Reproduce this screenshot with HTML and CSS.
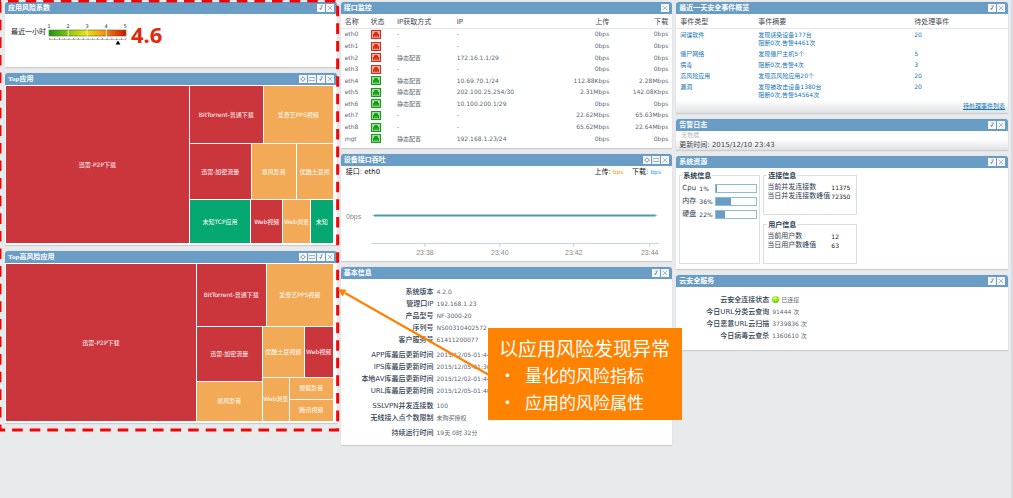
FILE: index.html
```html
<!DOCTYPE html>
<html lang="zh-CN">
<head>
<meta charset="utf-8">
<title>安全网关首页</title>
<link rel="stylesheet" href="styles.css">
</head>
<body>
<svg class="defs" aria-hidden="true">
  <symbol id="i-gear" viewBox="0 0 8 8"><circle cx="4" cy="4" r="1.7" fill="none" stroke="#a3b2be"/><path d="M4 1v1M4 6v1M1 4h1M6 4h1" stroke="#a3b2be"/></symbol>
  <symbol id="i-min" viewBox="0 0 8 8"><path d="M1 2.5h6M1 5.5h6" stroke="#a3b2be" fill="none"/><path d="M1.2 2v4M6.8 2v4" stroke="#b9c3cb" stroke-width=".6"/></symbol>
  <symbol id="i-ref" viewBox="0 0 8 8"><path d="M3.500 2h2.500M5 2.500L3.200 6M2.500 4.500h2" stroke="#8295a3" stroke-width=".9" fill="none"/></symbol>
  <symbol id="i-x" viewBox="0 0 8 8"><path d="M1.8 1.8l4.4 4.4M6.2 1.8L1.8 6.2" stroke="#a3b2be" stroke-width=".9"/></symbol>
  <symbol id="i-port" viewBox="0 0 10 9"><rect x=".5" y=".5" width="9" height="8" fill="#fff" stroke="currentColor"/><rect x="1" y="1" width="8" height="7" fill="currentColor" fill-opacity=".4"/><path d="M2 7.200V4h1V2.500h1V2h2v.5h1V4h1v3.200z" fill="currentColor"/><path d="M3.500 7.200V5.600M5 7.200V5.600M6.500 7.200V5.600" stroke="#fff" stroke-opacity=".5" stroke-width=".6"/></symbol>
</svg>
<main class="board">
  <div class="col marked">
    <section class="panel">
      <header><h2>应用风险系数</h2><button aria-label="刷新"><svg><use href="#i-ref"/></svg></button><button aria-label="关闭"><svg><use href="#i-x"/></svg></button></header>
      <div class="risk">
        <span>最近一小时</span>
        <svg class="gauge" viewBox="0 0 81 24">
          <defs><linearGradient id="g"><stop offset="0" stop-color="#129a10"/><stop offset=".25" stop-color="#8cc414"/><stop offset=".48" stop-color="#e8e30f"/><stop offset=".7" stop-color="#f29a17"/><stop offset="1" stop-color="#d40e00"/></linearGradient></defs>
          <g font-size="5" text-anchor="middle" fill="#333"><text x="2" y="5">1</text><text x="21" y="5">2</text><text x="40" y="5">3</text><text x="59" y="5">4</text><text x="78" y="5">5</text></g>
          <rect x="2" y="7" width="77" height="6" fill="url(#g)" stroke="#5d6b33" stroke-width=".6"/>
          <path d="M21.2 5.500v8.500M40.3 5.500v8.500M59.3 5.500v8.500" stroke="#dfe6ea"/>
          <path d="M2 16.5h77" stroke="#999" stroke-width=".6"/>
          <path d="M2.5 15.9h77" stroke="#555" stroke-dasharray=".8 3.97" stroke-width="1.4"/>
          <path d="M71 17.5l2.4 4h-4.8z" fill="#000"/>
        </svg>
        <strong>4.6</strong>
      </div>
    </section>
    <section class="panel">
      <header><h2>Top应用</h2><button aria-label="设置"><svg><use href="#i-gear"/></svg></button><button aria-label="收起"><svg><use href="#i-min"/></svg></button><button aria-label="刷新"><svg><use href="#i-ref"/></svg></button><button aria-label="关闭"><svg><use href="#i-x"/></svg></button></header>
      <div class="map map-a">
        <div class="red big">迅雷-P2P下载</div>
        <div class="stack a-rows">
          <div class="a1"><div class="red">BitTorrent-普通下载</div><div class="org">爱奇艺PPS视频</div></div>
          <div class="a2"><div class="red">迅雷-加密流量</div><div class="org">暴风影音</div><div class="org">优酷土豆视</div></div>
          <div class="a3"><div class="grn">未知TCP应用</div><div class="red">Web视频</div><div class="org">Web浏览</div><div class="grn">未知</div></div>
        </div>
      </div>
    </section>
    <section class="panel">
      <header><h2>Top高风险应用</h2><button aria-label="设置"><svg><use href="#i-gear"/></svg></button><button aria-label="收起"><svg><use href="#i-min"/></svg></button><button aria-label="刷新"><svg><use href="#i-ref"/></svg></button><button aria-label="关闭"><svg><use href="#i-x"/></svg></button></header>
      <div class="map map-b">
        <div class="red big">迅雷-P2P下载</div>
        <div class="stack b-rows">
          <div class="b1"><div class="red">BitTorrent-普通下载</div><div class="org">爱奇艺PPS视频</div></div>
          <div class="b2">
            <div class="stack b3"><div class="red">迅雷-加密流量</div><div class="org">暴风影音</div></div>
            <div class="stack b4">
              <div class="b5"><div class="org">优酷土豆视频</div><div class="red">Web视频</div></div>
              <div class="b6"><div class="org">Web浏览</div><div class="stack"><div class="org">搜狐影音</div><div class="org">腾讯视频</div></div></div>
            </div>
          </div>
        </div>
      </div>
    </section>
    <svg class="outline" aria-hidden="true"><rect width="100%" height="100%"/></svg>
  </div>

  <div class="col">
    <section class="panel">
      <header><h2>接口监控</h2><button aria-label="关闭"><svg><use href="#i-x"/></svg></button></header>
      <table class="ports">
        <thead><tr><th>名称</th><th>状态</th><th>IP获取方式</th><th>IP</th><th class="num">上传</th><th class="num">下载</th></tr></thead>
        <tbody>
          <tr><td>eth0</td><td class="down"><svg><use href="#i-port"/></svg></td><td>-</td><td>-</td><td class="num">0bps</td><td class="num">0bps</td></tr>
          <tr><td>eth1</td><td class="down"><svg><use href="#i-port"/></svg></td><td>-</td><td>-</td><td class="num">0bps</td><td class="num">0bps</td></tr>
          <tr><td>eth2</td><td class="down"><svg><use href="#i-port"/></svg></td><td>静态配置</td><td>172.16.1.1/29</td><td class="num">0bps</td><td class="num">0bps</td></tr>
          <tr><td>eth3</td><td class="down"><svg><use href="#i-port"/></svg></td><td>-</td><td>-</td><td class="num">0bps</td><td class="num">0bps</td></tr>
          <tr><td>eth4</td><td class="up"><svg><use href="#i-port"/></svg></td><td>静态配置</td><td>10.69.70.1/24</td><td class="num">112.88Kbps</td><td class="num">2.28Mbps</td></tr>
          <tr><td>eth5</td><td class="up"><svg><use href="#i-port"/></svg></td><td>静态配置</td><td>202.100.25.254/30</td><td class="num">2.31Mbps</td><td class="num">142.08Kbps</td></tr>
          <tr><td>eth6</td><td class="up"><svg><use href="#i-port"/></svg></td><td>静态配置</td><td>10.100.200.1/29</td><td class="num">0bps</td><td class="num">0bps</td></tr>
          <tr><td>eth7</td><td class="up"><svg><use href="#i-port"/></svg></td><td>-</td><td>-</td><td class="num">22.62Mbps</td><td class="num">65.63Mbps</td></tr>
          <tr><td>eth8</td><td class="up"><svg><use href="#i-port"/></svg></td><td>-</td><td>-</td><td class="num">65.62Mbps</td><td class="num">22.64Mbps</td></tr>
          <tr><td>mgt</td><td class="up"><svg><use href="#i-port"/></svg></td><td>静态配置</td><td>192.168.1.23/24</td><td class="num">0bps</td><td class="num">0bps</td></tr>
        </tbody>
      </table>
    </section>
    <section class="panel">
      <header><h2>设备接口吞吐</h2><button aria-label="设置"><svg><use href="#i-gear"/></svg></button><button aria-label="收起"><svg><use href="#i-min"/></svg></button><button aria-label="关闭"><svg><use href="#i-x"/></svg></button></header>
      <div class="rate"><span>接口: eth0</span><span>上传: <b class="u">bps</b></span><span>下载: <b class="d">bps</b></span></div>
      <svg class="chart" viewBox="0 0 332 82">
        <path d="M30 66.500H318M84 66v4M159 66v4M233 66v4M309 66v4" stroke="#c3d3e0" fill="none"/>
        <path d="M31 38.500H317" stroke="#c3d3e0"/><path d="M33 38.500H315" stroke="#4d9bae" stroke-width="2"/>
        <g font-size="7" fill="#888"><text x="5" y="42">0bps</text><g text-anchor="middle"><text x="84" y="78">23:38</text><text x="159" y="78">23:40</text><text x="233" y="78">23:42</text><text x="309" y="78">23:44</text></g></g>
      </svg>
    </section>
    <section class="panel">
      <header><h2>基本信息</h2><button aria-label="刷新"><svg><use href="#i-ref"/></svg></button><button aria-label="关闭"><svg><use href="#i-x"/></svg></button></header>
      <dl class="info">
        <dt>系统版本</dt><dd>4.2.0</dd>
        <dt>管理口IP</dt><dd>192.168.1.23</dd>
        <dt>产品型号</dt><dd>NF-3000-20</dd>
        <dt>序列号</dt><dd>NS00310402572</dd>
        <dt>客户服务号</dt><dd>61411200077</dd>
        <dt class="gap">APP库最后更新时间</dt><dd class="gap">2015/12/05-01:44</dd>
        <dt>IPS库最后更新时间</dt><dd>2015/12/05-01:30</dd>
        <dt>本地AV库最后更新时间</dt><dd>2015/12/02-01:44</dd>
        <dt>URL库最后更新时间</dt><dd>2015/12/05-01:40</dd>
        <dt class="gap">SSLVPN并发连接数</dt><dd class="gap">100</dd>
        <dt>无线接入点个数限制</dt><dd>未购买授权</dd>
        <dt class="gap">持续运行时间</dt><dd class="gap">19天 0时 32分</dd>
      </dl>
    </section>
  </div>

  <div class="col">
    <section class="panel">
      <header><h2>最近一天安全事件概览</h2><button aria-label="刷新"><svg><use href="#i-ref"/></svg></button><button aria-label="关闭"><svg><use href="#i-x"/></svg></button></header>
      <table class="events">
        <thead><tr><th>事件类型</th><th>事件摘要</th><th>待处理事件</th></tr></thead>
        <tbody>
          <tr><td>间谍软件</td><td>发现感染设备177台<br>阻断0次,告警4461次</td><td>20</td></tr>
          <tr><td>僵尸网络</td><td>发现僵尸主机5个</td><td>5</td></tr>
          <tr><td>病毒</td><td>阻断0次,告警4次</td><td>3</td></tr>
          <tr><td>高风险应用</td><td>发现高风险应用20个</td><td>20</td></tr>
          <tr><td>漏洞</td><td>发现被攻击设备1380台<br>阻断0次,告警54564次</td><td>20</td></tr>
        </tbody>
      </table>
      <div class="foot right"><a href="#">待处理事件列表</a></div>
    </section>
    <section class="panel">
      <header><h2>告警日志</h2><button aria-label="刷新"><svg><use href="#i-ref"/></svg></button><button aria-label="关闭"><svg><use href="#i-x"/></svg></button></header>
      <p class="empty">无数据</p>
      <div class="foot">更新时间: 2015/12/10 23:43</div>
    </section>
    <section class="panel">
      <header><h2>系统资源</h2><button aria-label="刷新"><svg><use href="#i-ref"/></svg></button><button aria-label="关闭"><svg><use href="#i-x"/></svg></button></header>
      <div class="res">
        <fieldset class="sys"><legend>系统信息</legend>
          <div class="meter"><span>Cpu</span><span>1%</span><i><b style="width:1%"></b></i></div>
          <div class="meter"><span>内存</span><span>36%</span><i><b style="width:36%"></b></i></div>
          <div class="meter"><span>硬盘</span><span>22%</span><i><b style="width:22%"></b></i></div>
        </fieldset>
        <fieldset><legend>连接信息</legend>
          <div class="kv"><span>当前并发连接数</span><span>11375</span><span>当日并发连接数峰值</span><span>72350</span></div>
        </fieldset>
        <fieldset><legend>用户信息</legend>
          <div class="kv"><span>当前用户数</span><span>12</span><span>当日用户数峰值</span><span>63</span></div>
        </fieldset>
      </div>
    </section>
    <section class="panel">
      <header><h2>云安全服务</h2><button aria-label="刷新"><svg><use href="#i-ref"/></svg></button><button aria-label="关闭"><svg><use href="#i-x"/></svg></button></header>
      <dl class="info cloud">
        <dt>云安全连接状态</dt><dd><i class="dot"></i>已连接</dd>
        <dt>今日URL分类云查询</dt><dd>91444 次</dd>
        <dt>今日恶意URL云扫描</dt><dd>3739836 次</dd>
        <dt>今日病毒云查杀</dt><dd>1360610 次</dd>
      </dl>
    </section>
  </div>
</main>
<svg class="arrow" viewBox="0 0 152 90" aria-hidden="true"><path d="M151 87L7 5" stroke="#ff8200" stroke-width="2.200"/><path d="M0 1l8.500 .8-3.800 6.700z" fill="#ff8200"/></svg>
<aside class="callout">
  <h3>以应用风险发现异常</h3>
  <ul><li>量化的风险指标</li><li>应用的风险属性</li></ul>
</aside>
</body>
</html>
```
FILE: styles.css
```css
* { box-sizing: border-box; }
html { background: #e9eaec; }
body {
  margin: 0;
  position: relative;
  min-height: 100vh;
  border-right: 2px solid #d9dbde;
  font: 6px/8px "DejaVu Sans", "Noto Sans CJK SC", sans-serif;
  color: #5c6873;
}
h2, h3, p, dl, dd, ul { margin: 0; padding: 0; }
.defs { position: absolute; width: 0; height: 0; }
.board {
  display: grid;
  grid-template-columns: repeat(3, minmax(0, 1fr));
  align-items: start;
  gap: 4px;
  padding: 2px 3px 0 5px;
}
.col { display: flex; flex-direction: column; gap: 5px; }
.marked { position: relative; }
.panel {
  background: #fff;
  border-bottom: 1px solid #c9cbcf;
  border-radius: 3px 3px 1px 1px;
  box-shadow: 0 0 1px #b4b8bd;
}
.panel header {
  display: flex;
  align-items: center;
  gap: 1px;
  height: 12px;
  padding: 0 3px;
  background: #6a9dc5;
  border-radius: 3px 3px 0 0;
}
.panel h2 {
  flex: 1;
  font: 700 7px/12px "Liberation Serif", "Noto Sans CJK SC", serif;
  color: #fff;
}
.panel button {
  width: 8px;
  height: 8px;
  padding: 0;
  border: 0;
  background: #f4f6f8;
}
.panel button svg { display: block; width: 8px; height: 8px; }

.risk { display: flex; align-items: flex-start; height: 53px; padding: 9px 6px; color: #222; font-size: 7px; }
.risk span { padding-top: 5px; }
.gauge { width: 81px; height: 24px; margin: 0 3px 0 1px; }
.risk strong { font: 700 22px/22px "Noto Sans", sans-serif; color: #e0280a; }

.map { display: grid; gap: 1px; padding: 1px 4px 2px 1px; color: #fff; }
.map div { display: grid; gap: 1px; min-width: 0; min-height: 0; }
.red, .org, .grn { place-items: center; place-content: center; overflow: hidden; white-space: nowrap; }
.red { background: #cb363d; }
.org { background: #f2aa56; }
.grn { background: #04a870; }
.map-a { height: 160px; grid-template-columns: 183fr 143fr; }
.map .a-rows { grid-template-rows: 57fr 55fr 43fr; }
.map .a1 { grid-template-columns: 73fr 69fr; }
.map .a2 { grid-template-columns: 61fr 44fr 36fr; }
.map .a3 { grid-template-columns: 61fr 31fr 27fr 22fr; }
.map-b { height: 160px; grid-template-columns: 190fr 136fr; }
.map .b-rows { grid-template-rows: 62fr 93fr; }
.map .b1 { grid-template-columns: 69fr 66fr; }
.map .b2 { grid-template-columns: 65fr 70fr; }
.map .b3 { grid-template-rows: 53fr 39fr; }
.map .b4 { grid-template-rows: 49fr 43fr; }
.map .b5 { grid-template-columns: 41fr 28fr; }
.map .b6 { grid-template-columns: 26fr 43fr; }
.outline {
  position: absolute;
  top: -1px;
  left: -5px;
  width: calc(100% + 6px);
  height: calc(100% + 7px);
  overflow: visible;
  pointer-events: none;
}
.outline rect { fill: none; stroke: #f40505; stroke-width: 3; stroke-dasharray: 10.6 7; stroke-dashoffset: -8; }

table { width: 100%; border-collapse: collapse; table-layout: fixed; }
th, td { padding: 0; text-align: left; font-weight: 400; white-space: nowrap; }
th { padding-top: 2px; font-size: 7px; color: #3f4850; border-bottom: 1px solid #e4e6e8; }
.ports { height: 134px; border-bottom: 3px solid #fff; }
.ports th { height: 14px; }
.ports th:nth-child(1) { width: 9%; }
.ports th:nth-child(2) { width: 8%; }
.ports th:nth-child(3) { width: 18%; }
.ports th:nth-child(4) { width: 26%; }
.ports th:nth-child(5) { width: 20%; }
.ports tr > :first-child { padding-left: 4px; }
.ports .num { text-align: right; }
.ports tr > :last-child { padding-right: 4px; }
.ports svg { display: block; width: 10px; height: 9px; }
.down { color: #d92a12; }
.up { color: #12a012; }

.rate { display: flex; gap: 8px; padding: 2px 11px 1px 5px; font-size: 7px; color: #111; }
.rate span:first-child { flex: 1; }
.rate b { font: 400 6px/8px "DejaVu Sans Mono", monospace; }
.rate .u { color: #f0a010; }
.rate .d { color: #2c9bd8; }
.chart { display: block; width: 100%; padding-bottom: 2px; font-family: "Liberation Sans", sans-serif; }

.info { display: grid; grid-template-columns: 28% 1fr; column-gap: 3px; padding: 7px 0 6px; line-height: 12px; }
.info dt { text-align: right; font-size: 7px; font-weight: 500; color: #2d4152; white-space: nowrap; }
.info .gap { margin-top: 3px; }
.cloud { padding: 7px 0 8px; }
.dot {
  display: inline-block;
  width: 7px;
  height: 7px;
  margin-right: 2px;
  border-radius: 50%;
  vertical-align: middle;
  background: radial-gradient(circle at 40% 30%, #d8ff70, #7bd800 60%, #56a800);
}

.events { color: #1476b4; }
.events th { height: 14px; }
.events td { padding: 2px 0 1px; vertical-align: top; }
.events tr > :first-child { padding-left: 4px; width: 82px; }
.events th:nth-child(2) { width: 47%; }
.foot {
  padding: 2px 3px 1px;
  background: linear-gradient(#fff, #dfe2e4);
  font-size: 7px;
  color: #3f4850;
}
.right { padding-bottom: 3px; text-align: right; font-size: 6px; }
.foot a { color: #1476b4; }
.empty { padding-left: 5px; color: #b9bcc0; }

.res {
  display: grid;
  grid-template-columns: 81px 94px;
  grid-template-rows: 43px 43px;
  gap: 6px 3px;
  padding: 4px 3px 5px;
  color: #222;
}
fieldset { min-width: 0; margin: 0; padding: 3px; border: 1px solid #dcdee0; font-size: 7px; line-height: 9px; }
legend { padding: 0 1px; font-weight: 700; line-height: 8px; color: #2d4152; }
.sys { grid-row: span 2; padding: 2px; }
.meter { display: grid; grid-template-columns: 16px 15px 1fr; align-items: center; gap: 1px; height: 13px; font-size: 6px; color: #2d4152; }
.meter span:first-child { font-size: 7px; }
.meter i { height: 9px; border: 1px solid #8fb9d8; }
.meter b { display: block; height: 100%; background: #6a9dc5; }
.kv { display: grid; grid-template-columns: 64px 1fr; white-space: nowrap; color: #2d4152; }
.kv span:nth-child(even) { color: #222; font-size: 6px; }

.arrow { position: absolute; left: 338px; top: 288px; width: 152px; height: 90px; }
.callout {
  position: absolute;
  left: 488px;
  top: 328px;
  padding: 6px 12px 5px 11px;
  background: #ff8200;
  color: #fff;
  font-family: "Noto Sans CJK SC", sans-serif;
  line-height: 27px;
}
.callout h3 { font-size: 19px; font-weight: 400; line-height: 27px; }
.callout ul { list-style: none; font-size: 17px; }
.callout li { display: flex; }
.callout li::before { content: "•"; width: 26px; }
```
